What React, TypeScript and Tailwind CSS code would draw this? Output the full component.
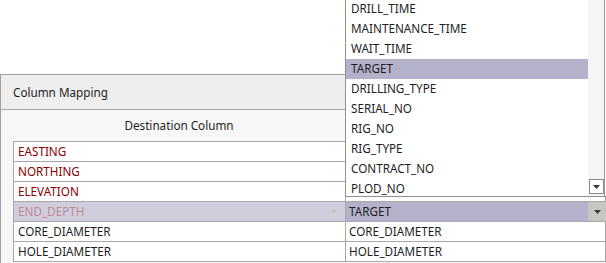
import React from 'react';

const listItems = [
  'DRILL_TIME', 'MAINTENANCE_TIME', 'WAIT_TIME', 'TARGET', 'DRILLING_TYPE',
  'SERIAL_NO', 'RIG_NO', 'RIG_TYPE', 'CONTRACT_NO', 'PLOD_NO',
];

type Row = { dest: string; src?: string; required?: boolean; editing?: boolean };

// source cells of the first three rows sit under the open list
const rows: Row[] = [
  { dest: 'EASTING', required: true },
  { dest: 'NORTHING', required: true },
  { dest: 'ELEVATION', required: true },
  { dest: 'END_DEPTH', src: 'TARGET', editing: true },
  { dest: 'CORE_DIAMETER', src: 'CORE_DIAMETER' },
  { dest: 'HOLE_DIAMETER', src: 'HOLE_DIAMETER' },
];

function Arrow({ className }: { className: string }) {
  return (
    <svg width="7" height="4" viewBox="0 0 7 4" className={className}>
      <path d="M0 0h7L3.5 4z" fill="currentColor" />
    </svg>
  );
}

function DropList() {
  return (
    <div className="absolute left-[345px] top-0 w-[261px] h-[197px] bg-white border-l border-b border-[#8f8f8f] flex">
      <div className="w-[242px] h-full overflow-hidden">
        <div className="-mt-px">
          {listItems.map((item) => (
            <div
              key={item}
              className={`h-[20px] flex items-center pl-[5px] ${item === 'TARGET' ? 'bg-[#b4b1cb]' : ''}`}
            >
              {item}
            </div>
          ))}
        </div>
      </div>
      <div className="relative w-[17px] h-full bg-[#f5f5f5] border-r border-[#9a9a9a]">
        <div className="absolute left-px bottom-[2px] w-[15px] h-[15px] bg-white border border-[#8a8a8a] flex items-center justify-center">
          <Arrow className="text-[#3a3a3a]" />
        </div>
      </div>
    </div>
  );
}

export default function App() {
  return (
    <div
      className="relative w-[606px] h-[263px] overflow-hidden bg-white text-[11.7px] text-[#1e1e1e]"
      style={{ fontFamily: '"Noto Sans", "Open Sans", sans-serif' }}
    >
      <div className="h-[74px]" />
      <div className="border-l border-t border-[#a0a0a0] bg-[#f7f7f7] h-[189px]">
        <div className="h-[35px] bg-[#eeeeee] border-b border-[#a8a8a8] flex items-center pl-3 pt-[2px]">
          Column Mapping
        </div>
        <div className="pl-[12px]">
          <div className="grid grid-cols-[332px_1fr] h-[31px] items-center">
            <div className="text-center">Destination Column</div>
            <div />
          </div>
          <div className="border-t border-l border-[#a8a8a8]">
            {rows.map((r) => (
              <div key={r.dest} className="grid grid-cols-[332px_1fr] h-[20px] border-b border-[#a8a8a8]">
                {r.editing ? (
                  <div className="bg-[#d0cddd] text-[#c0899b] flex items-center justify-between pl-[4px] pr-[8px] border-r border-[#a8a8a8]">
                    <span>{r.dest}</span>
                    <Arrow className="text-[#c4c4c4]" />
                  </div>
                ) : (
                  <div className={`bg-white flex items-center pl-[4px] border-r border-[#a8a8a8] ${r.required ? 'text-[#8b0000]' : ''}`}>
                    {r.dest}
                  </div>
                )}
                {r.editing ? (
                  <div className="flex">
                    <div className="flex-1 bg-[#b4b1cb] flex items-center pl-[3px]">{r.src}</div>
                    <div className="w-[18px] bg-[#c6c6c2] flex items-center justify-center">
                      <Arrow className="text-[#3a3a3a]" />
                    </div>
                  </div>
                ) : (
                  <div className="bg-white flex items-center pl-[3px] border-r border-[#a8a8a8]">{r.src}</div>
                )}
              </div>
            ))}
          </div>
        </div>
      </div>
      <DropList />
    </div>
  );
}
